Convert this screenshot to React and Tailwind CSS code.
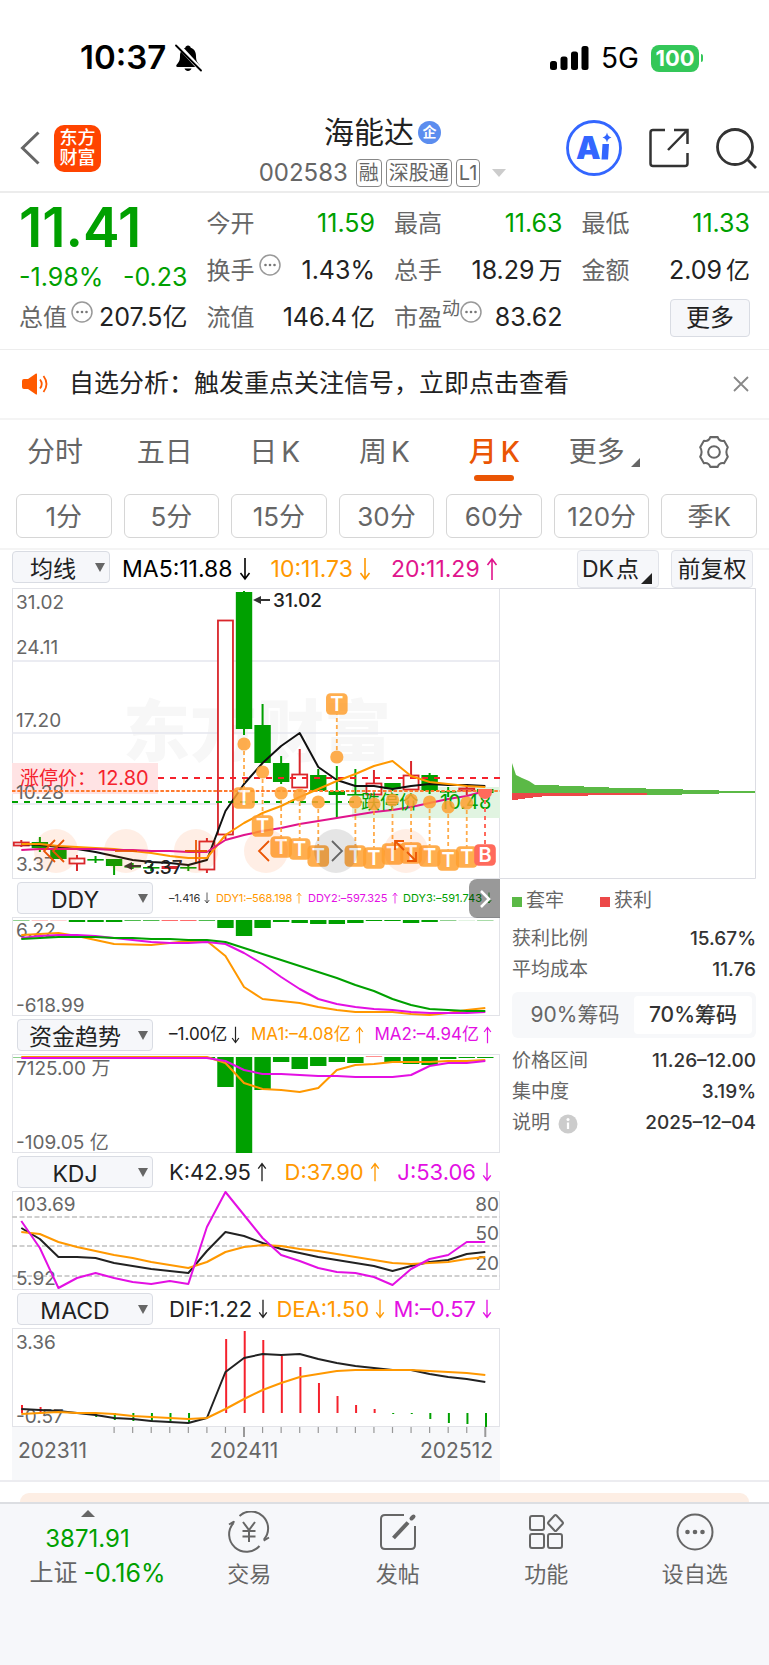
import React, { useState } from "react";

const RED = "#d9262b";
const GREEN = "#00a000";
const ORANGE = "#ff9800";
const MAGENTA = "#e310e3";
const BLACK = "#222222";
const GREY = "#666666";

// x of the n-th month on every chart
const barX = (index) => 9.3 + 18.56 * index;

const toPoints = (values) =>
  values.map((y, index) => `${barX(index)},${y}`).join(" ");

// [direction, body top, body bottom, wick top, wick bottom]
const candles = [
  ["up", 254, 257, 252, 259],
  ["down", 254, 260, 249, 264],
  ["down", 261, 271, 261, 271],
  ["up", 270, 275, 267, 283],
  ["down", 271, 272, 268, 275],
  ["down", 271, 278, 271, 287],
  ["down", 278, 279, 275, 281],
  ["down", 279, 280, 276, 283],
  ["flat", 278, 281, 278, 281],
  ["down", 279, 280, 276, 283],
  ["up", 253, 281, 250, 285],
  ["up", 32, 246, 32, 251],
  ["down", 4, 141, 3, 147],
  ["down", 137, 175, 116, 175],
  ["down", 175, 194, 168, 196],
  ["up", 186, 199, 161, 199],
  ["down", 187, 203, 181, 203],
  ["down", 203, 207, 178, 230],
  ["down", 206, 207, 181, 207],
  ["up", 195, 206, 182, 206],
  ["down", 195, 201, 195, 203],
  ["up", 187, 201, 173, 203],
  ["down", 187, 203, 185, 206],
  ["down", 203, 204, 199, 209],
  ["up", 200, 202, 196, 207],
  ["down", 201, 205, 201, 205],
];

const ma5 = [
  256, 257, 259, 261, 264, 268, 272, 274, 275, 277, 272, 223, 196, 175, 158,
  145, 179, 192, 198, 198, 201, 198, 196, 197, 197, 198,
];
const ma10 = [
  256, 256, 258, 259, 260, 261, 263, 265, 268, 270, 270, 247, 235, 225, 218,
  209, 201, 193, 186, 178, 173, 188, 194, 196, 198, 199,
];
const ma20 = [
  262, 261, 261, 261, 261, 262, 262, 263, 263, 264, 264, 252, 247, 243, 240,
  236, 233, 230, 227, 224, 222, 219, 215, 211, 208, 203,
];

// [month index, dot y, badge y]
const signals = [
  [12, 156, 210],
  [13, 184, 238],
  [14, 205, 259],
  [15, 207, 261],
  [16, 214, 268],
  [17, 169, 116],
  [18, 214, 268],
  [19, 216, 270],
  [20, 212, 266],
  [21, 212, 265],
  [22, 214, 268],
  [23, 219, 272],
  [24, 215, 269],
];

const ddyBars = [
  [0, 4, "#8fd08f"],
  [1, 4, "#ffc4c4"],
  [2, 4, "#ffd5d5"],
  [3, 5, GREEN],
  [4, 5, GREEN],
  [5, 5, GREEN],
  [6, 4, "#4dbb4d"],
  [7, 4, "#4dbb4d"],
  [8, 4, "#ff6b6b"],
  [9, 4, "#ff6b6b"],
  [10, 4, "#4dbb4d"],
  [11, 11, GREEN],
  [12, 19, GREEN],
  [13, 11, GREEN],
  [14, 5, GREEN],
  [15, 6, GREEN],
  [16, 7, GREEN],
  [17, 7, GREEN],
  [18, 6, GREEN],
  [19, 4, GREEN],
  [20, 4, GREEN],
  [21, 6, GREEN],
  [22, 5, GREEN],
  [23, 4, "#8fd08f"],
  [24, 4, "#e2f4e2"],
  [25, 4, "#a8dba8"],
];

const fundBars = [
  [0, 4, "#8fd08f"],
  [1, 4, "#ffd5d5"],
  [2, 4, "#8fd08f"],
  [3, 4, "#8fd08f"],
  [4, 4, "#8fd08f"],
  [5, 4, "#8fd08f"],
  [10, 4, GREEN],
  [11, 33, GREEN],
  [12, 99, GREEN],
  [13, 36, GREEN],
  [14, 8, GREEN],
  [15, 15, GREEN],
  [16, 12, GREEN],
  [17, 8, GREEN],
  [18, 9, GREEN],
  [19, 2, "#ff8f8f"],
  [20, 8, GREEN],
  [21, 10, GREEN],
  [22, 11, GREEN],
  [23, 5, GREEN],
  [24, 4, GREEN],
  [25, 4, GREEN],
];

const macdBars = [
  [0, 77],
  [1, 79],
  [2, 83],
  [4, 89],
  [5, 92],
  [6, 93],
  [7, 94],
  [8, 93],
  [9, 94],
  [11, 11],
  [12, 3],
  [13, 12],
  [14, 28],
  [15, 39],
  [16, 55],
  [17, 68],
  [18, 77],
  [19, 81],
  [20, 86],
  [21, 86],
  [22, 91],
  [23, 95],
  [24, 96],
  [25, 99],
];

function Line({ values, color }) {
  return (
    <polyline
      points={toPoints(values)}
      fill="none"
      stroke={color}
      strokeWidth="2"
      strokeLinejoin="round"
    />
  );
}

function AxisText({ x = 4, y, anchor = "start", children }) {
  return (
    <text x={x} y={y} textAnchor={anchor} fontSize="19" fill={GREY}>
      {children}
    </text>
  );
}

function Arrow({ up, className }) {
  return (
    <svg
      viewBox="0 0 12 24"
      className={className}
      fill="none"
      stroke="currentColor"
      strokeWidth="1.6"
    >
      <path d={up ? "M6 23V2M1.5 8 6 2l4.5 6" : "M6 1v21M1.5 16 6 22l4.5-6"} />
    </svg>
  );
}

function MoreDots() {
  return (
    <svg viewBox="0 0 22 22" className="size-[22px] shrink-0 -translate-y-1.5">
      <circle cx="11" cy="11" r="10" fill="none" stroke="#999" strokeWidth="1.5" />
      <circle cx="6.5" cy="11" r="1.3" fill="#777" />
      <circle cx="11" cy="11" r="1.3" fill="#777" />
      <circle cx="15.5" cy="11" r="1.3" fill="#777" />
    </svg>
  );
}

function Quote({ label, value, unit, sup, dots, green }) {
  return (
    <div className="flex h-[47px] items-center justify-between whitespace-nowrap">
      <span className="flex items-center gap-1 text-2xl text-[#666]">
        {label}
        {sup && <sup className="-mx-1 text-lg leading-none">{sup}</sup>}
        {dots && <MoreDots />}
      </span>
      <span
        className={`flex items-center gap-1 text-[25px] ${
          green ? "text-[#00a000]" : "text-[#222]"
        }`}
      >
        {value}
        {unit && <span className="text-2xl">{unit}</span>}
      </span>
    </div>
  );
}

function PickIndicator({ name, options, wide }) {
  return (
    <div className={`relative ${wide ? "w-[136px]" : "w-[98px]"}`}>
      <select
        aria-label={name}
        defaultValue={options[0]}
        className={`h-8 w-full appearance-none rounded border border-[#d9dce3] bg-[#f6f7fa] text-[23px] text-[#222] [text-align-last:center] ${
          wide ? "pr-5" : "pr-4"
        }`}
      >
        {options.map((option) => (
          <option key={option}>{option}</option>
        ))}
      </select>
      <svg
        viewBox="0 0 10 9"
        className="pointer-events-none absolute top-3 right-[5px] h-[9px] w-2.5"
      >
        <path d="M0 0h10L5 9z" fill="#666" />
      </svg>
    </div>
  );
}

// Title row of a sub chart: indicator picker and its latest values
function ChartHeader({ options, values, size = "lg" }) {
  const sizes = {
    sm: "text-[11px]",
    md: "text-[17px]",
    lg: "text-[22px]",
  };
  const gaps = {
    sm: "gap-1",
    md: "gap-1",
    lg: "gap-1.5",
  };
  const arrows = {
    sm: "h-3 w-1.5",
    md: "h-[18px] w-[9px]",
    lg: "h-6 w-2.5",
  };
  return (
    <div className="flex h-[38px] items-center pr-2 pl-[5px]">
      <PickIndicator name={options[0]} options={options} wide />
      <div
        className={`ml-4 flex min-w-0 flex-1 items-center justify-between whitespace-nowrap ${sizes[size]}`}
      >
        {values.map((item) => (
          <span
            key={item.text}
            className={`flex items-center ${gaps[size]} ${item.color}`}
          >
            {item.text}
            <Arrow up={item.up} className={arrows[size]} />
          </span>
        ))}
      </div>
    </div>
  );
}

function Chart({ height, label, children }) {
  return (
    <svg
      viewBox={`0 0 488 ${height}`}
      role="img"
      aria-label={label}
      className="block w-full overflow-visible"
    >
      <rect
        x="0.5"
        y="0.5"
        width="487"
        height={height - 1}
        fill="none"
        stroke="#e2e3e8"
      />
      {children}
    </svg>
  );
}

function KLineChart() {
  return (
    <Chart height={291} label="月K">
      <text x="111" y="168" fontSize="67" fontWeight="900" fill="#f7f7f7">
        东方财富
      </text>
      {[73, 145, 216].map((y) => (
        <line key={y} x1="0" x2="488" y1={y} y2={y} stroke="#e4e6ee" strokeWidth="1.5" />
      ))}
      <rect x="0" y="175" width="146" height="31" fill="#ffe3e4" />
      <rect x="340" y="199" width="148" height="31" fill="#e1f4e1" />

      <AxisText y={21}>31.02</AxisText>
      <AxisText y={66}>24.11</AxisText>
      <AxisText y={139}>17.20</AxisText>
      <AxisText y={211}>10.28</AxisText>
      <AxisText y={283}>3.37</AxisText>

      {candles.map(([kind, top, bottom, high, low], index) => {
        const x = barX(index);
        const color = kind === "down" ? GREEN : RED;
        return (
          <g key={index}>
            <path
              d={`M${x} ${high}V${top}M${x} ${bottom}V${low}`}
              stroke={color}
              strokeWidth="2"
            />
            <rect
              x={kind === "up" ? x - 7.5 : x - 8.2}
              y={kind === "up" ? top + 0.5 : top}
              width={kind === "up" ? 15 : 16.4}
              height={Math.max(bottom - top, 1.6)}
              fill={kind === "up" ? "#fff" : color}
              stroke={kind === "up" ? color : "none"}
              strokeWidth="1.8"
            />
          </g>
        );
      })}

      <line x1="146" x2="488" y1="190" y2="190" stroke="#f5222d" strokeWidth="2" strokeDasharray="6 6" />
      <line x1="0" x2="488" y1="203" y2="203" stroke="#ff7a2e" strokeWidth="1.8" strokeDasharray="3.5 1.8" />
      <line x1="0" x2="350" y1="214" y2="214" stroke="#00a000" strokeWidth="2" strokeDasharray="6 6" />

      <Line values={ma5} color="#111" />
      <Line values={ma10} color={ORANGE} />
      <Line values={ma20} color="#e0148c" />

      <text x="8" y="197" fontSize="19" fill="#f5222d">
        涨停价：
      </text>
      <text x="86" y="197" fontSize="20" fill="#f5222d">
        12.80
      </text>
      <text x="349" y="221" fontSize="19" fill="#00a000">
        跌停价
      </text>
      <text x="428" y="221" fontSize="20" fill="#00a000">
        10.48
      </text>

      <path d="M246 12h12" stroke="#333" strokeWidth="2" />
      <path d="M241 12l8-4v8z" fill="#333" />
      <text x="261" y="19" fontSize="19" fontWeight="500" fill="#222">
        31.02
      </text>
      <path d="M117 278h12" stroke="#333" strokeWidth="2" />
      <path d="M112 278l8-4v8z" fill="#333" />
      <text x="131" y="286" fontSize="19" fontWeight="500" fill="#222">
        3.37
      </text>

      {signals.map(([index, dot, badge]) => {
        const x = barX(index);
        return (
          <g key={index} opacity="0.85">
            <line
              x1={x}
              x2={x}
              y1={dot}
              y2={badge}
              stroke="#ff9d2b"
              strokeWidth="1.8"
              strokeDasharray="4 3"
            />
            <circle cx={x} cy={dot} r="6.6" fill="#ffa030" />
            <rect x={x - 10.8} y={badge - 10.8} width="21.6" height="21.6" rx="4.5" fill="#ffa030" />
            <text
              x={x}
              y={badge + 7}
              textAnchor="middle"
              fontSize="20"
              fontWeight="600"
              fill="#fff"
            >
              T
            </text>
          </g>
        );
      })}
      <g>
        <line x1="473" x2="473" y1="204" y2="260" stroke="#ff6a5c" strokeWidth="2" strokeDasharray="4 4" />
        <path d="M466 201h14v3a7 7 0 0 1-14 0z" fill="#ff6a5c" />
        <rect x="462.2" y="256.2" width="21.6" height="21.6" rx="4.5" fill="#ff6a5c" />
        <text x="473" y="274" textAnchor="middle" fontSize="20" fontWeight="600" fill="#fff">
          B
        </text>
      </g>
    </Chart>
  );
}

const chartTools = [
  { name: "最早", path: "M21 11 10 22l11 11M30 11 19 22l11 11" },
  { name: "缩小", path: "M11 22h22" },
  { name: "放大", path: "M11 22h22M22 11v22" },
  { name: "左移", path: "M25 12 15 22l10 10" },
  { name: "右移", path: "M18 12l10 10-10 10", grey: true },
  { name: "全屏", path: "M20 12h-9v9M11 12l9 9M23 32h9v-9M32 32l-9-9" },
];

function ChartTools() {
  return (
    <div className="absolute bottom-1.5 left-[22px] flex gap-[26px]">
      {chartTools.map((tool) => (
        <button
          key={tool.name}
          aria-label={tool.name}
          className={`size-11 rounded-full ${
            tool.grey ? "bg-black/10" : "bg-[#ff5a00]/10"
          }`}
        >
          <svg
            viewBox="0 0 44 44"
            fill="none"
            strokeWidth="1.8"
            stroke={tool.grey ? "#666" : "#ea5504"}
          >
            <path d={tool.path} />
          </svg>
        </button>
      ))}
    </div>
  );
}

function DdyChart() {
  return (
    <Chart height={99} label="DDY">
      {ddyBars.map(([index, bottom, color]) => (
        <rect key={index} x={barX(index) - 8.2} y="3" width="16.4" height={bottom - 3} fill={color} />
      ))}
      <AxisText y={20}>6.22</AxisText>
      <AxisText y={95}>-618.99</AxisText>
      <Line
        color={ORANGE}
        values={[
          18, 17, 16, 19, 23, 27, 27.5, 28, 26, 24, 24, 39, 70, 82, 84, 86, 90,
          93, 95, 95, 95, 97, 98, 96, 93, 91,
        ]}
      />
      <Line
        color={MAGENTA}
        values={[
          21, 19, 18, 18, 19, 21, 23, 25, 26, 26, 25, 27, 36, 47, 60, 72, 82,
          87, 90, 92, 93, 95, 96, 96, 96, 95,
        ]}
      />
      <Line
        color={GREEN}
        values={[
          22, 21, 20, 20, 20, 21, 21, 22, 22, 23, 23, 25, 31, 37, 43, 49, 55,
          61, 68, 74, 82, 88, 92, 93, 94, 94,
        ]}
      />
    </Chart>
  );
}

function FundChart() {
  return (
    <Chart height={99} label="资金趋势">
      {fundBars.map(([index, bottom, color]) => (
        <rect
          key={index}
          x={barX(index) - 8.2}
          y={Math.min(bottom, 3)}
          width="16.4"
          height={Math.abs(bottom - 3)}
          fill={color}
        />
      ))}
      <AxisText y={21}>7125.00 万</AxisText>
      <AxisText y={95}>-109.05 亿</AxisText>
      <Line
        color={ORANGE}
        values={[
          3, 3, 3, 3, 3, 3, 3, 3, 3, 3, 3, 9, 29, 35, 36, 38, 34, 16, 11, 10, 8,
          8, 8, 7, 7, 6,
        ]}
      />
      <Line
        color={MAGENTA}
        values={[
          4, 4, 4, 4, 4, 4, 4, 4, 4, 4, 4, 7, 16, 20, 20, 21, 22, 22, 23, 23,
          23, 21, 12, 9, 9, 7,
        ]}
      />
    </Chart>
  );
}

function KdjChart() {
  return (
    <Chart height={99} label="KDJ">
      {[26, 55, 85].map((y) => (
        <line
          key={y}
          x1="0"
          x2="488"
          y1={y}
          y2={y}
          stroke="#cfcfcf"
          strokeWidth="1.8"
          strokeDasharray="5 2.5"
        />
      ))}
      <AxisText y={20}>103.69</AxisText>
      <AxisText y={94}>5.92</AxisText>
      <AxisText x={487} y={20} anchor="end">80</AxisText>
      <AxisText x={487} y={49} anchor="end">50</AxisText>
      <AxisText x={487} y={79} anchor="end">20</AxisText>
      <Line
        color={BLACK}
        values={[
          37, 48, 66, 66, 67, 72, 75, 78, 80, 82, 60, 41, 45, 52, 58, 62, 66,
          69, 72, 75, 80, 75, 71, 69, 63, 61,
        ]}
      />
      <Line
        color={ORANGE}
        values={[
          41, 43, 51, 56, 60, 64, 67, 71, 74, 77, 71, 61, 56, 54, 55, 58, 60,
          63, 66, 69, 72, 73, 72, 71, 68, 66,
        ]}
      />
      <Line
        color={MAGENTA}
        values={[
          30, 57, 97, 87, 82, 87, 91, 93, 90, 93, 36, 1, 24, 47, 64, 70, 77, 81,
          82, 86, 94, 78, 68, 64, 51, 51,
        ]}
      />
    </Chart>
  );
}

function MacdChart() {
  return (
    <Chart height={99} label="MACD">
      {macdBars.map(([index, end]) => (
        <line
          key={index}
          x1={barX(index) + 0.7}
          x2={barX(index) + 0.7}
          y1="85"
          y2={end}
          stroke={end < 85 ? "#f5222d" : GREEN}
          strokeWidth="2"
        />
      ))}
      <AxisText y={21}>3.36</AxisText>
      <AxisText y={95}>-0.57</AxisText>
      <Line
        color={BLACK}
        values={[
          81, 82, 83, 85, 87, 90, 91, 93, 94, 95, 90, 44, 30, 26, 27, 26, 31,
          35, 38, 40, 42, 42, 46, 49, 51, 54,
        ]}
      />
      <Line
        color={ORANGE}
        values={[
          86, 85, 84, 85, 85, 86, 88, 89, 90, 91, 90, 81, 71, 62, 55, 49, 46,
          43, 42, 42, 42, 42, 43, 44, 45, 47,
        ]}
      />
    </Chart>
  );
}

function TimeAxis() {
  const ticks = Array.from({ length: 21 }, (_, index) => index + 5);
  return (
    <svg viewBox="0 0 488 53" className="block w-full bg-[#f7f8fa]">
      {ticks.map((index) => {
        const major = index === 12 || index === 25;
        return (
          <line
            key={index}
            x1={barX(index)}
            x2={barX(index)}
            y1="0"
            y2={major ? 10 : 6}
            stroke="#999"
            strokeWidth={major ? 2 : 1.2}
          />
        );
      })}
      <g fontSize="21" fill={GREY}>
        <text x="6" y="31">202311</text>
        <text x={barX(12)} y="31" textAnchor="middle">202411</text>
        <text x="481" y="31" textAnchor="end">202512</text>
      </g>
    </svg>
  );
}

function ChipRow({ label, value, info }) {
  return (
    <div className="flex h-[31px] items-center justify-between">
      <span className="flex items-center gap-2 text-[#666]">
        {label}
        {info && (
          <svg viewBox="0 0 20 20" className="size-5">
            <circle cx="10" cy="10" r="9.5" fill="#ccc" />
            <circle cx="10" cy="5.5" r="1.5" fill="#fff" />
            <path d="M10 8.5V15" stroke="#fff" strokeWidth="2.2" />
          </svg>
        )}
      </span>
      <span className="font-medium text-[#333]">{value}</span>
    </div>
  );
}

// Cost distribution panel on the right
function ChipPanel() {
  const [range, setRange] = useState("70%筹码");
  return (
    <aside className="text-[19px]">
      <svg viewBox="0 0 256 291" className="block w-full">
        <path d="M0 .5h255.5v290H0" fill="none" stroke="#dcdde3" />
        <path
          d="M12 175l4 12 6 3 7 3 6 4h24v1h25v1h25v1h37v1h37v1h36v1h36v2h-36v1h-37v1h-36v-1H12z"
          fill="#5bb946"
        />
        <path d="M12 205h135v2H88v1H42v1h-9v1h-8v1h-7v1h-6z" fill="#ec4848" />
      </svg>
      <div className="pl-3">
        <div className="flex h-[45px] items-center text-[#666]">
          <span className="mr-1 size-2.5 bg-[#5bb946]" />
          套牢
          <span className="mr-1 ml-9 size-2.5 bg-[#ec4848]" />
          获利
        </div>
        <ChipRow label="获利比例" value="15.67%" />
        <ChipRow label="平均成本" value="11.76" />
        <div className="mt-1.5 mb-2 flex rounded-md bg-[#f7f8fa] p-1 text-[21px]">
          {["90%筹码", "70%筹码"].map((item) => (
            <button
              key={item}
              onClick={() => setRange(item)}
              className={`h-[38px] flex-1 rounded whitespace-nowrap ${
                range === item ? "bg-white font-medium text-[#333]" : "text-[#666]"
              }`}
            >
              {item}
            </button>
          ))}
        </div>
        <ChipRow label="价格区间" value="11.26–12.00" />
        <ChipRow label="集中度" value="3.19%" />
        <ChipRow label="说明" value="2025–12–04" info />
      </div>
    </aside>
  );
}

function StatusBar() {
  return (
    <div className="flex h-[116px] items-center justify-between pr-[66px] pl-20 text-black">
      <div className="flex items-center gap-2">
        <span className="text-[33px] font-semibold">10:37</span>
        <svg viewBox="0 0 28 28" className="size-7">
          <path
            d="M14 1.5c-1.5 0-2.5 1-2.7 2.2C7.7 4.8 6 8 6 12c0 5-1.5 6.5-3.5 9-.6.9-.3 2 1 2h21c1.300 0 1.600-1.100 1-2-2-2.5-3.5-4-3.5-9 0-4-1.700-7.200-5.300-8.300C16.5 2.5 15.5 1.5 14 1.5zM10.5 24.5h7c-.5 1.600-1.900 2.5-3.5 2.5s-3-.9-3.5-2.5z"
            fill="#000"
          />
          <path d="M3 0l25 27" stroke="#fff" strokeWidth="4.5" />
          <path d="M2 1.5l25 25" stroke="#000" strokeWidth="1.8" strokeLinecap="round" />
        </svg>
      </div>
      <div className="flex items-center gap-3">
        <svg viewBox="0 0 39 24" className="h-6 w-[39px]">
          <rect x="0" y="15" width="7" height="9" rx="2.5" />
          <rect x="10.5" y="10.5" width="7" height="13.5" rx="2.5" />
          <rect x="21" y="5.5" width="7" height="18.5" rx="2.5" />
          <rect x="31.5" y="0" width="7" height="24" rx="2.5" />
        </svg>
        <span className="text-[28px]">5G</span>
        <span className="flex items-center gap-0.5">
          <span className="flex h-[27px] w-12 items-center justify-center rounded-lg bg-[#34c759] text-[22px] font-bold text-white">
            100
          </span>
          <span className="h-2 w-0.5 rounded-r bg-[#34c759]" />
        </span>
      </div>
    </div>
  );
}

function TopBar() {
  return (
    <header className="grid grid-cols-[1fr_auto_1fr] border-b-2 border-[#ececec] pr-3 pb-[3px] pl-5">
      <div className="flex h-16 items-center gap-3.5">
        <button aria-label="返回">
          <svg viewBox="0 0 20 34" className="h-[34px] w-5" fill="none" stroke="#666" strokeWidth="3">
            <path d="M18.5 1.5 2.5 17l16 15.5" />
          </svg>
        </button>
        <a
          href="#home"
          className="flex size-[47px] items-center justify-center rounded-[10px] bg-[#ff4400] text-center text-lg leading-5 font-medium text-white"
        >
          东方
          <br />
          财富
        </a>
      </div>

      <div className="mr-3 flex flex-col items-center">
        <h1 className="flex h-8 items-center gap-1 text-[30px] leading-8 text-[#222]">
          海能达
          <span className="flex size-[23px] items-center justify-center rounded-full bg-[#5b8def] text-sm font-bold text-white">
            企
          </span>
        </h1>
        <div className="mt-2.5 flex h-[30px] items-center gap-1 text-2xl text-[#666]">
          <span className="mr-1">002583</span>
          <span className="rounded border border-[#888] px-0.5 text-xl leading-[26px]">融</span>
          <span className="rounded border border-[#888] px-0.5 text-xl leading-[26px]">深股通</span>
          <span className="rounded border border-[#888] px-0.5 text-xl leading-[26px]">L1</span>
          <svg viewBox="0 0 14 8" className="ml-2 h-2 w-3.5">
            <path d="M0 0h14L7 8z" fill="#ccc" />
          </svg>
        </div>
      </div>

      <div className="flex h-16 items-center justify-end gap-[27px]">
        <button aria-label="Ai">
          <svg viewBox="0 0 56 56" className="size-14">
            <circle cx="28" cy="28" r="26.5" fill="#fff" stroke="#3366ff" strokeWidth="2.8" />
            <text x="10" y="39" fontSize="31" fontWeight="900" fill="#3366ff">
              A
            </text>
            <path d="M36.5 24h6.500l-1 15.500h-6.500z" fill="#3366ff" />
            <path d="M41 12.5c.8 3 1.700 4 4.500 5-2.800 1-3.700 2-4.500 5-.8-3-1.700-4-4.500-5 2.800-1 3.700-2 4.500-5z" fill="#3366ff" />
          </svg>
        </button>
        <button aria-label="分享">
          <svg viewBox="0 0 40 40" className="size-10" fill="none" stroke="#333" strokeWidth="2.5">
            <path d="M16 2H4Q1.500 2 1.500 4.500v31Q1.500 38 4 38h32q2.500 0 2.500-2.500V25" />
            <path d="M25 2h13.5v14M38 2.500 19 22" />
          </svg>
        </button>
        <button aria-label="搜索">
          <svg viewBox="0 0 41 41" className="size-[41px]" fill="none" stroke="#333" strokeWidth="2.8">
            <circle cx="19" cy="19" r="17.5" />
            <path d="M31 31l9 9" />
          </svg>
        </button>
      </div>
    </header>
  );
}

function QuoteBoard() {
  return (
    <section className="grid grid-cols-4 gap-[19px] border-b border-[#ededed] px-[19px] pt-[7px] pb-2">
      <div>
        <div className="h-[54px] text-[55px] leading-[54px] font-semibold text-[#00a000]">
          11.41
        </div>
        <div className="flex h-10 items-center justify-between pt-2 text-[25px] text-[#00a000]">
          <span>-1.98%</span>
          <span>-0.23</span>
        </div>
        <Quote label="总值" value="207.5亿" dots />
      </div>
      <div>
        <Quote label="今开" value="11.59" green />
        <Quote label="换手" value="1.43%" dots />
        <Quote label="流值" value="146.4" unit="亿" />
      </div>
      <div>
        <Quote label="最高" value="11.63" green />
        <Quote label="总手" value="18.29" unit="万" />
        <Quote label="市盈" value="83.62" sup="动" dots />
      </div>
      <div>
        <Quote label="最低" value="11.33" green />
        <Quote label="金额" value="2.09" unit="亿" />
        <div className="flex h-[47px] items-center justify-end">
          <button className="h-[38px] w-20 rounded border border-[#d9dce3] bg-[#f6f7fa] text-2xl text-[#222]">
            更多
          </button>
        </div>
      </div>
    </section>
  );
}

function Notice() {
  return (
    <section className="flex h-[70px] items-center border-b-2 border-[#f4f4f4] pr-5 pl-[22px]">
      <svg viewBox="0 0 26 22" className="h-[22px] w-[26px]">
        <path d="M0 8q0-2 2-2h4l8-5.500q1-.5 1 1v19q0 1.500-1 1L6 16H2q-2 0-2-2z" fill="#ff5a00" />
        <path d="M18 6.500q3.500 4.500 0 9M21.500 3q6 8 0 16" fill="none" stroke="#ff5a00" strokeWidth="1.8" />
      </svg>
      <a href="#signal" className="ml-[21px] flex-1 text-[25px] text-[#222]">
        自选分析：触发重点关注信号，立即点击查看
      </a>
      <button aria-label="关闭">
        <svg viewBox="0 0 16 16" className="size-4" stroke="#888" strokeWidth="1.8">
          <path d="M1 1l14 14M15 1 1 15" />
        </svg>
      </button>
    </section>
  );
}

function PeriodTabs() {
  const [period, setPeriod] = useState("月K");
  const periods = [
    ["分时"],
    ["五日"],
    ["日", "K"],
    ["周", "K"],
    ["月", "K"],
  ];
  const minutes = ["1分", "5分", "15分", "30分", "60分", "120分", "季K"];
  return (
    <section className="border-b-2 border-[#f4f4f4] pb-2.5">
      <nav className="grid h-16 grid-cols-7 text-[28px] text-[#666]">
        {periods.map(([unit, suffix = ""]) => {
          const active = period === unit + suffix;
          return (
            <button
              key={unit}
              onClick={() => setPeriod(unit + suffix)}
              className={`relative flex items-center justify-center gap-1 ${
                active ? "font-medium text-[#ea5504]" : ""
              }`}
            >
              <span>{unit}</span>
              {suffix && <span>{suffix}</span>}
              {active && (
                <span className="absolute bottom-[3px] left-1/2 h-1.5 w-10 -translate-x-1/2 rounded-full bg-[#ea5504]" />
              )}
            </button>
          );
        })}
        <button className="flex items-center justify-center gap-1.5">
          更多
          <svg viewBox="0 0 9 9" className="mt-5 size-[9px]">
            <path d="M9 0v9H0z" fill="#666" />
          </svg>
        </button>
        <button aria-label="设置" className="flex items-center justify-center">
          <svg viewBox="0 0 32 32" className="size-[34px]" fill="none" stroke="#666" strokeWidth="1.9">
            <path
              d="M12.5 2h7c1 3 3 4 6 3.500l3.500 6c-1.800 3-1.800 6 0 9l-3.500 6c-3-.5-5 .5-6 3.500h-7c-1-3-3-4-6-3.500l-3.500-6c1.800-3 1.800-6 0-9l3.500-6c3 .5 5-.5 6-3.500z"
              strokeLinejoin="round"
            />
            <circle cx="16" cy="16" r="5.5" />
          </svg>
        </button>
      </nav>
      <div className="mt-2.5 grid grid-cols-7 gap-3 pr-3 pl-4 text-[26px] text-[#666]">
        {minutes.map((item) => (
          <button key={item} className="h-11 rounded-md border border-[#d6d6d6]">
            {item}
          </button>
        ))}
      </div>
    </section>
  );
}

function AverageRow() {
  return (
    <div className="flex h-[38px] items-center justify-between pr-4 pl-3">
      <div className="flex items-center gap-3 text-[23px] whitespace-nowrap">
        <PickIndicator name="均线" options={["均线", "BOLL"]} />
        <span className="flex items-center gap-1.5 text-black">
          MA5:11.88
          <Arrow className="h-6 w-3" />
        </span>
        <span className="ml-2 flex items-center gap-1.5 text-[#ff9800]">
          10:11.73
          <Arrow className="h-6 w-3" />
        </span>
        <span className="ml-2 flex items-center gap-1.5 text-[#e0148c]">
          20:11.29
          <Arrow up className="h-6 w-3" />
        </span>
      </div>
      <div className="flex gap-3 text-[23px] whitespace-nowrap text-[#222]">
        <button className="relative flex h-[38px] w-[82px] items-center gap-0.5 rounded border border-[#e1e3e9] bg-[#f6f7fa] pl-1">
          <span>DK</span>
          <span>点</span>
          <svg viewBox="0 0 11 11" className="absolute right-1.5 bottom-[3px] size-[11px]">
            <path d="M11 0v11H0z" fill="#222" />
          </svg>
        </button>
        <button className="h-[38px] w-[82px] rounded border border-[#e1e3e9] bg-[#f6f7fa]">
          前复权
        </button>
      </div>
    </div>
  );
}

const actions = [
  {
    name: "交易",
    icon: (
      <>
        <path d="M11.500 5A17 17 0 0 1 36 28.500M5.500 12A17 17 0 0 0 31.500 35" />
        <path d="M1 13.500 5.500 11l1 .5M41 26.500 36.500 29l-.5-1" />
        <path d="M15 11l6 8 6-8M21 19v12M14.500 20h13M14.500 25.500h13" />
      </>
    ),
  },
  {
    name: "发帖",
    icon: (
      <>
        <path d="M27 4H8Q4 4 4 8v26q0 4 4 4h26q4 0 4-4V15" />
        <path d="M16.500 27 31 11.500" strokeWidth="4" />
        <path d="M34.500 7.500l2-2" strokeWidth="4" strokeLinecap="round" />
      </>
    ),
  },
  {
    name: "功能",
    icon: (
      <>
        <rect x="5" y="5" width="14" height="14" rx="2" />
        <rect x="5" y="23" width="14" height="14" rx="2" />
        <rect x="23" y="23" width="14" height="14" rx="2" />
        <path d="M29.500 4.500q1-1 2 0l6 6.500q1 1 0 2l-6 6.500q-1 1-2 0l-6-6.500q-1-1 0-2z" />
      </>
    ),
  },
  {
    name: "设自选",
    icon: (
      <>
        <circle cx="21" cy="21" r="17.5" />
        <g fill="#666" stroke="none">
          <circle cx="13.5" cy="21" r="2.3" />
          <circle cx="21" cy="21" r="2.3" />
          <circle cx="28.5" cy="21" r="2.3" />
        </g>
      </>
    ),
  },
];

function BottomBar() {
  return (
    <footer className="flex flex-1 border-t-2 border-[#dcdee2] bg-[#f6f7fa] pb-[70px] text-[#666]">
      <a href="#index" className="flex w-[175px] flex-col items-center pt-1.5 pl-5">
        <svg viewBox="0 0 14 7" className="mr-5 h-[7px] w-3.5">
          <path d="M7 0l7 7H0z" fill="#666" />
        </svg>
        <span className="mt-2 mr-5 text-2xl leading-7 text-[#00a000]">
          3871.91
        </span>
        <span className="mt-1 flex items-center gap-1.5 text-2xl leading-8 whitespace-nowrap">
          上证 <span className="text-[25px] text-[#00a000]">-0.16%</span>
        </span>
      </a>
      {actions.map((action) => (
        <button
          key={action.name}
          className="flex flex-1 flex-col items-center pt-[7px] text-[22px] leading-8"
        >
          <svg viewBox="0 0 42 42" className="mb-[5px] size-[42px]" fill="none" stroke="#666" strokeWidth="2">
            {action.icon}
          </svg>
          {action.name}
        </button>
      ))}
    </footer>
  );
}

export default function App() {
  return (
    <div className="flex min-h-screen flex-col bg-white font-[family-name:Inter,'Noto_Sans_CJK_SC',sans-serif]">
      <StatusBar />
      <TopBar />
      <QuoteBoard />
      <Notice />
      <PeriodTabs />
      <AverageRow />

      <main className="grid grid-cols-[488fr_256fr] border-b-2 border-[#ececf0] pr-[13px] pl-3">
        <div>
          <div className="relative">
            <KLineChart />
            <ChartTools />
          </div>
          <div className="relative">
            <ChartHeader
              size="sm"
              options={["DDY", "DDX"]}
              values={[
                { text: "–1.416", color: "text-[#333]" },
                { text: "DDY1:–568.198", color: "text-[#ff9800]", up: true },
                { text: "DDY2:–597.325", color: "text-[#e310e3]", up: true },
                { text: "DDY3:–591.743", color: "text-[#00a000]" },
              ]}
            />
            <button
              aria-label="展开"
              className="absolute top-0 right-0 flex h-[39px] w-[31px] items-center justify-center rounded-l-lg bg-black/40"
            >
              <svg viewBox="0 0 12 18" className="h-[18px] w-3" fill="none" stroke="#fff" strokeWidth="2.5">
                <path d="M2 1l8 8-8 8" />
              </svg>
            </button>
          </div>
          <DdyChart />
          <ChartHeader
            size="md"
            options={["资金趋势", "成交量"]}
            values={[
              { text: "–1.00亿", color: "text-[#222]" },
              { text: "MA1:–4.08亿", color: "text-[#ff9800]", up: true },
              { text: "MA2:–4.94亿", color: "text-[#e310e3]", up: true },
            ]}
          />
          <FundChart />
          <ChartHeader
            options={["KDJ", "RSI"]}
            values={[
              { text: "K:42.95", color: "text-[#222]", up: true },
              { text: "D:37.90", color: "text-[#ff9800]", up: true },
              { text: "J:53.06", color: "text-[#e310e3]" },
            ]}
          />
          <KdjChart />
          <ChartHeader
            options={["MACD", "WR"]}
            values={[
              { text: "DIF:1.22", color: "text-[#222]" },
              { text: "DEA:1.50", color: "text-[#ff9800]" },
              { text: "M:–0.57", color: "text-[#e310e3]" },
            ]}
          />
          <MacdChart />
          <TimeAxis />
        </div>
        <ChipPanel />
      </main>

      <div className="mx-5 mt-[11px] h-[9px] rounded-t-[20px] bg-[#fdeee4]" />
      <BottomBar />
    </div>
  );
}
